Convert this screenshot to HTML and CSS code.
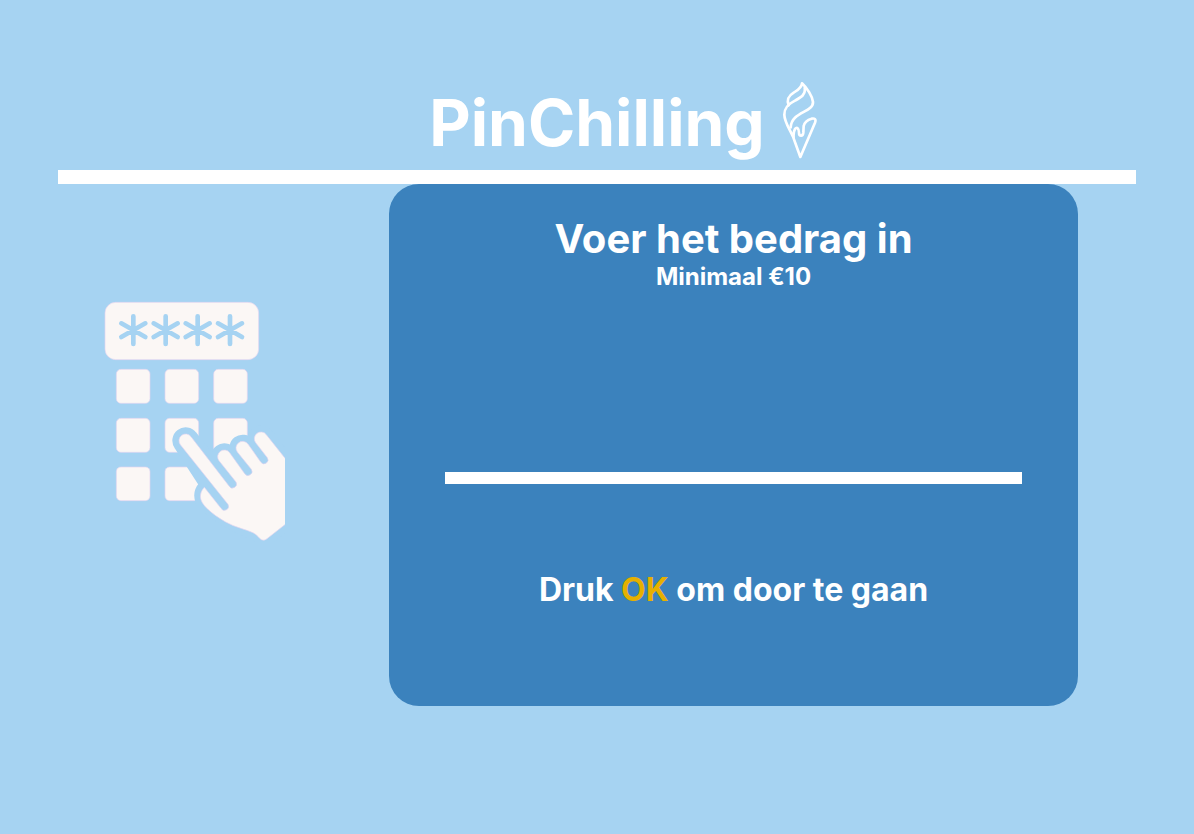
FILE: index.html
```html
<!DOCTYPE html>
<html lang="nl">
<head>
  <meta charset="utf-8">
  <meta name="viewport" content="width=device-width, initial-scale=1">
  <title>PinChilling</title>
  <link rel="stylesheet" href="styles.css">
</head>
<body>
  <div class="screen">
    <header class="header">
      <h1 class="brand">PinChilling</h1>
      <svg class="cone" viewBox="34 18 108 237" aria-hidden="true">
        <path d="M57 94C50 76 56 66 72 56C84 48 96 42 97 28C112 42 128 66 130 84C131 116 66 112 63 160"/>
        <path d="M105 42C109 62 94 70 76 80C54 91 44 102 44 122C44 142 58 162 70 188L92 249L136 146C140 136 135 132 126 134C112 138 104 146 102 156L101 176C100 188 88 188 88 176C88 162 81 158 76 165C72 172 71 180 72 190"/>
      </svg>
    </header>
    <main class="main">
      <svg class="keypad" viewBox="27 -297 543 723" aria-hidden="true">
        <g class="shape">
          <rect x="30" y="-293" width="461" height="172" rx="32"/>
          <rect x="64" y="-92" width="101" height="102" rx="14"/>
          <rect x="210" y="-92" width="101" height="102" rx="14"/>
          <rect x="356" y="-92" width="101" height="102" rx="14"/>
          <rect x="64" y="55" width="101" height="102" rx="14"/>
          <rect x="210" y="55" width="101" height="102" rx="14"/>
          <rect x="356" y="55" width="101" height="102" rx="14"/>
          <rect x="64" y="201" width="101" height="101" rx="14"/>
          <rect x="210" y="201" width="101" height="101" rx="14"/>
        </g>
        <path class="stars" d="M115-251v83M79-230l72 41M79-189l72-41M212-251v83M176-230l72 41M176-189l72-41M308-251v83M272-230l72 41M272-189l72-41M405-251v83M369-230l72 41M369-189l72-41"/>
        <path class="halo" d="M256 134A20 20 0 0 1 288 110L405 258L372 182A20 20 0 0 1 404 158L452 220L427 156A20 20 0 0 1 459 132L500 186L482 128A20 20 0 0 1 514 104L600 214V350L515 418L480 402Q395 370 330 315C312 295 316 275 328 262L380 325Z"/>
        <path class="shape" d="M256 134A20 20 0 0 1 288 110L402 258A11 11 0 0 0 423 246L372 182A20 20 0 0 1 404 158L449 221A11 11 0 0 0 469 208L427 156A20 20 0 0 1 459 132L497 186A11 11 0 0 0 517 173L482 128A20 20 0 0 1 514 104L580 187V366L516 416Q504 426 493 414Q486 404 474 398C452 388 420 382 392 366C364 350 334 328 322 308C312 292 316 274 328 262L378 325A11 11 0 0 0 399 313Z"/>
      </svg>
      <form class="card">
        <label class="title" for="amount">Voer het bedrag in</label>
        <p class="note">Minimaal €10</p>
        <input class="amount" id="amount" type="text" inputmode="numeric">
        <p class="prompt">Druk <span class="ok">OK</span> om door te gaan</p>
      </form>
    </main>
  </div>
</body>
</html>
```
FILE: styles.css
```css
* {
  box-sizing: border-box;
}

body {
  margin: 0;
  min-height: 100vh;
  background: #a6d3f2;
  color: #fff;
  font-family: Inter, "Liberation Sans", sans-serif;
  font-weight: 700;
}

.screen {
  padding: 80px 58px;
}

.header {
  display: grid;
  grid-template-columns: 1fr auto 1fr;
  column-gap: 16px;
  height: 104px;
  border-bottom: 14px solid #fff;
}

.brand {
  grid-column: 2;
  margin: 0;
  font-size: 64px;
  line-height: 86px;
}

.cone {
  width: 36px;
  height: 79px;
  fill: none;
  stroke: #fff;
  stroke-width: 8;
  stroke-linecap: round;
  stroke-linejoin: round;
}

.main {
  display: flex;
  justify-content: space-between;
  align-items: flex-start;
  gap: 104px;
  padding: 0 58px 0 46px;
}

.keypad {
  flex: none;
  width: 181px;
  height: 241px;
  margin-top: 117px;
}

.shape {
  fill: #fbf7f5;
  stroke: #e3d5f0;
  stroke-width: 2;
}

.stars,
.halo {
  fill: none;
  stroke: #a6d3f2;
  stroke-linecap: round;
  stroke-linejoin: round;
}

.stars {
  stroke-width: 14;
}

.halo {
  fill: #a6d3f2;
  stroke-width: 40;
}

.card {
  flex: 1;
  display: flex;
  flex-direction: column;
  align-items: center;
  padding: 31px 56px 96px;
  border-radius: 30px;
  background: #3b82bd;
  text-align: center;
}

.title {
  font-size: 40px;
  line-height: 48px;
}

.note {
  margin: 0;
  font-size: 24px;
  line-height: 28px;
}

.amount {
  width: 100%;
  height: 193px;
  padding: 96px 0 0;
  border: 0;
  border-bottom: 12px solid #fff;
  border-radius: 0;
  outline: 0;
  background: transparent;
  color: inherit;
  font: inherit;
  font-size: 64px;
  text-align: center;
}

.prompt {
  margin: 86px 0 0;
  font-size: 32px;
  line-height: 40px;
}

.ok {
  color: #e6b000;
}
```
